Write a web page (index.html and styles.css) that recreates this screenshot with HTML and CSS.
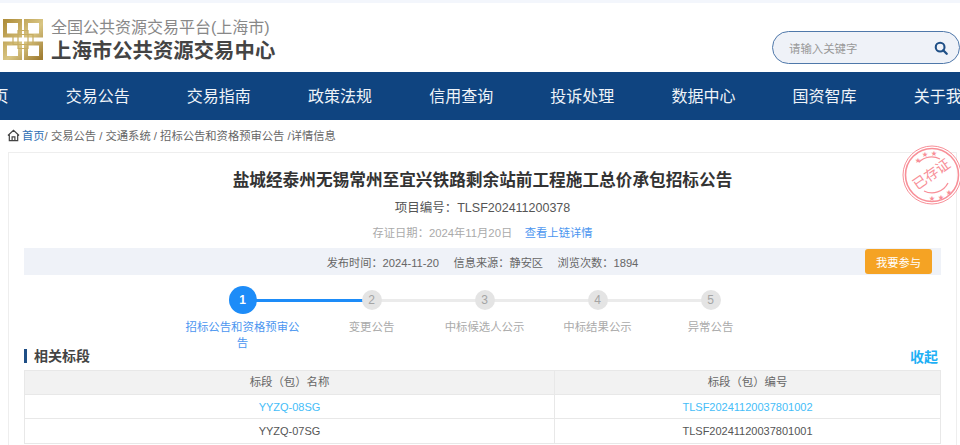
FILE: index.html
```html
<!DOCTYPE html>
<html lang="zh">
<head>
<meta charset="utf-8">
<title>上海市公共资源交易中心</title>
<link rel="stylesheet" href="styles.css">
</head>
<body>
<div class="topstrip"></div>
<header class="header">
  <div class="brand">
    <svg class="logo" viewBox="0 0 40 41" width="40" height="41" aria-hidden="true">
      <defs><linearGradient id="gold" x1="0" y1="0" x2="1" y2="1"><stop offset="0" stop-color="#b08f3c"/><stop offset="0.55" stop-color="#d9c684"/><stop offset="1" stop-color="#a07d32"/></linearGradient></defs>
      <g fill="none" stroke="url(#gold)" stroke-width="4">
        <path d="M2 2H17V16.500H2ZM23 2H38V16.500H23ZM2 24.500H17V39H2ZM23 24.500H38V39H23Z"/>
      </g>
      <g fill="none" stroke="#c7ad62" stroke-width="1.200">
        <path d="M15 11.500V29.500H25V11.500ZM10 15.500H30V25.500H10Z"/>
      </g>
    </svg>
    <div class="titles">
      <div class="subtitle">全国公共资源交易平台(上海市)</div>
      <div class="title">上海市公共资源交易中心</div>
    </div>
  </div>
  <div class="search">
    <span class="search-text">请输入关键字</span>
    <svg viewBox="0 0 16 16" width="14" height="14" aria-hidden="true"><circle cx="7" cy="7" r="5" fill="none" stroke="#1f4f86" stroke-width="2.400"/><path d="M10.500 10.500L14.500 14.500" stroke="#1f4f86" stroke-width="2.600" stroke-linecap="round"/></svg>
  </div>
</header>
<nav class="nav">
  <span class="nav-item nav-first">首页</span>
  <span class="nav-item">交易公告</span>
  <span class="nav-item">交易指南</span>
  <span class="nav-item">政策法规</span>
  <span class="nav-item">信用查询</span>
  <span class="nav-item">投诉处理</span>
  <span class="nav-item">数据中心</span>
  <span class="nav-item">国资智库</span>
  <span class="nav-item">关于我们</span>
</nav>
<div class="crumbs">
  <svg viewBox="0 0 14 14" width="13" height="13" aria-hidden="true"><path d="M1 7L7 1.500L13 7M2.500 6v6.500h9V6M5.500 12.500V8.500h3v4" fill="none" stroke="#444" stroke-width="1.300"/></svg>
  <span class="crumb-text"><b>首页</b>/ 交易公告 / 交通系统 / 招标公告和资格预审公告 /详情信息</span>
</div>
<main class="card">
  <h1 class="heading">盐城经泰州无锡常州至宜兴铁路剩余站前工程施工总价承包招标公告</h1>
  <div class="code">项目编号：TLSF202411200378</div>
  <div class="proof"><span>存证日期：2024年11月20日</span><a>查看上链详情</a></div>
  <div class="metabar">
    <div class="meta"><span>发布时间：2024-11-20</span><span>信息来源：静安区</span><span>浏览次数：1894</span></div>
    <button class="join">我要参与</button>
  </div>
  <ol class="steps">
    <li class="step done"><span class="dot">1</span><span class="label">招标公告和资格预审公告</span></li>
    <li class="step"><span class="dot">2</span><span class="label">变更公告</span></li>
    <li class="step"><span class="dot">3</span><span class="label">中标候选人公示</span></li>
    <li class="step"><span class="dot">4</span><span class="label">中标结果公示</span></li>
    <li class="step last"><span class="dot">5</span><span class="label">异常公告</span></li>
  </ol>
  <div class="section">
    <h2 class="section-title">相关标段</h2>
    <a class="collapse">收起</a>
  </div>
  <div class="table">
    <div class="row head"><div>标段（包）名称</div><div>标段（包）编号</div></div>
    <div class="row link"><div>YYZQ-08SG</div><div>TLSF20241120037801002</div></div>
    <div class="row"><div>YYZQ-07SG</div><div>TLSF20241120037801001</div></div>
  </div>
  <svg class="stamp" viewBox="0 0 60 60" width="60" height="60" aria-hidden="true">
    <circle cx="30" cy="30" r="29" fill="#fff" fill-opacity=".75" stroke="#f88f98" stroke-width="1"/>
    <circle cx="30" cy="30" r="26.500" fill="none" stroke="#f88f98" stroke-width="1.600"/>
    <path d="M17 17A18 18 0 0 1 38 14M22 46A18 18 0 0 0 46 38" fill="none" stroke="#f88f98" stroke-width="1.300"/>
    <g class="stamp-stars">
      <text x="13" y="17">★</text><text x="20" y="11">★</text><text x="29" y="10">★</text>
      <text x="27" y="55">★</text><text x="36" y="54">★</text><text x="44" y="49">★</text>
    </g>
    <text class="stamp-text" x="30" y="34" transform="rotate(-35 30 30)" text-anchor="middle">已存证</text>
  </svg>
</main>
</body>
</html>
```

FILE: styles.css
```css
* { box-sizing: border-box; }
html, body { margin: 0; padding: 0; }
body {
  width: 960px; height: 445px; overflow: hidden; background: #fff;
  font-family: "Liberation Sans", "Noto Sans CJK SC", sans-serif;
  color: #555; font-size: 12px;
}
.topstrip { height: 3px; background: #f3f6fc; }
.header { height: 69px; display: flex; justify-content: space-between; align-items: flex-start; padding: 13px 0 0 3px; }
.brand { display: flex; gap: 8px; align-items: flex-start; padding-top: 3px; }
.logo { flex: none; }
.titles { margin-top: -2px; }
.subtitle { font-size: 16px; line-height: 22px; color: #888; }
.title { font-size: 20.400px; line-height: 25px; font-weight: 700; color: #444; }
.search {
  width: 188px; height: 33px; margin: 15px 0 0; border: 1px solid #4f78aa; border-radius: 17px;
  background: #eff2f8; display: flex; align-items: center; justify-content: space-between; padding: 0 11px 0 16px;
}
.search-text { font-size: 11.400px; color: #999; }
.nav { height: 48px; background: #0f4480; display: flex; align-items: center; color: #eef3f8; font-size: 16px; padding-bottom: 3px; }
.nav-item { flex: none; width: 121.150px; text-align: center; white-space: nowrap; }
.nav-first { width: 89.150px; margin-left: -52px; }
.crumbs { height: 30px; display: flex; align-items: center; gap: 2px; padding: 0 0 0 7px; font-size: 11.300px; color: #666; }
.crumb-text b { font-weight: 400; color: #2f6fb5; }
.card { position: relative; margin: 2px 3px 0 8px; height: 300px; border: 1px solid #eee; border-bottom: 0; padding: 0 15px; }
.heading { margin: 16px 0 0; font-size: 16.670px; line-height: 24px; font-weight: 700; color: #333; text-align: center; }
.code { margin-top: 5px; font-size: 12.500px; line-height: 20px; text-align: center; color: #555; }
.proof { margin-top: 5px; display: flex; justify-content: center; gap: 12.500px; font-size: 11.300px; line-height: 20px; color: #aaa; }
.proof a { color: #4c96f0; }
.metabar { margin-top: 5px; height: 27px; background: #eff2f8; display: flex; align-items: center; justify-content: center; position: relative; }
.meta { display: flex; gap: 14.500px; font-size: 11.200px; color: #666; }
.join { position: absolute; right: 9px; top: 1px; width: 67px; height: 25px; border: 0; border-radius: 3px; background: #f5a324; color: #fff; font: inherit; font-size: 11.300px; }
.steps { list-style: none; margin: 11px 0 0; padding: 0 0 0 146px; display: flex; }
.step { position: relative; width: 113px; flex: none; display: flex; flex-direction: column; align-items: center; }
.step::after { content: ""; position: absolute; left: 50%; top: 12.500px; width: 113px; height: 3px; background: #ebebeb; }
.step.last::after { display: none; }
.step.done { width: 145px; }
.step.done::after { width: 129px; background: #1d8cf8; }
.dot { position: relative; z-index: 1; width: 20px; height: 20px; margin-top: 4px; border-radius: 50%; background: #e4e4e4; color: #a5a5a5; font-size: 12px; font-weight: 400; display: flex; align-items: center; justify-content: center; }
.done .dot { width: 28px; height: 28px; margin-top: 0; background: #1d8cf8; color: #fff; font-weight: 700; }
.label { margin-top: 5px; width: 118px; font-size: 11.400px; line-height: 16px; text-align: center; color: #aaa; }
.step:not(.done) .label { margin-top: 9px; }
.done .label { color: #4c96f0; }
.section { margin-top: -5px; padding-right: 3px; display: flex; align-items: center; justify-content: space-between; height: 20px; }
.section-title { margin: 0; border-left: 3px solid #1f4f86; height: 14px; line-height: 14px; padding-left: 7px; font-size: 14px; font-weight: 700; color: #444; }
.collapse { font-size: 14px; font-weight: 700; color: #1fb0f5; }
.table { margin-top: 4px; border: 1px solid #e8e8e8; border-bottom: 0; }
.row { display: grid; grid-template-columns: 529px 1fr; height: 24.500px; border-bottom: 1px solid #e8e8e8; font-size: 11px; line-height: 24.500px; text-align: center; color: #555; }
.row > div + div { border-left: 1px solid #e8e8e8; }
.row.head { height: 23.500px; line-height: 23.500px; background: #f2f2f2; color: #666; font-size: 11.400px; }
.row.link { color: #45bdf8; }
.stamp { position: absolute; right: -6px; top: -8px; }
.stamp-stars { font-size: 6px; fill: #f88f98; }
.stamp-text { font-size: 14px; fill: #f88f98; }
```
